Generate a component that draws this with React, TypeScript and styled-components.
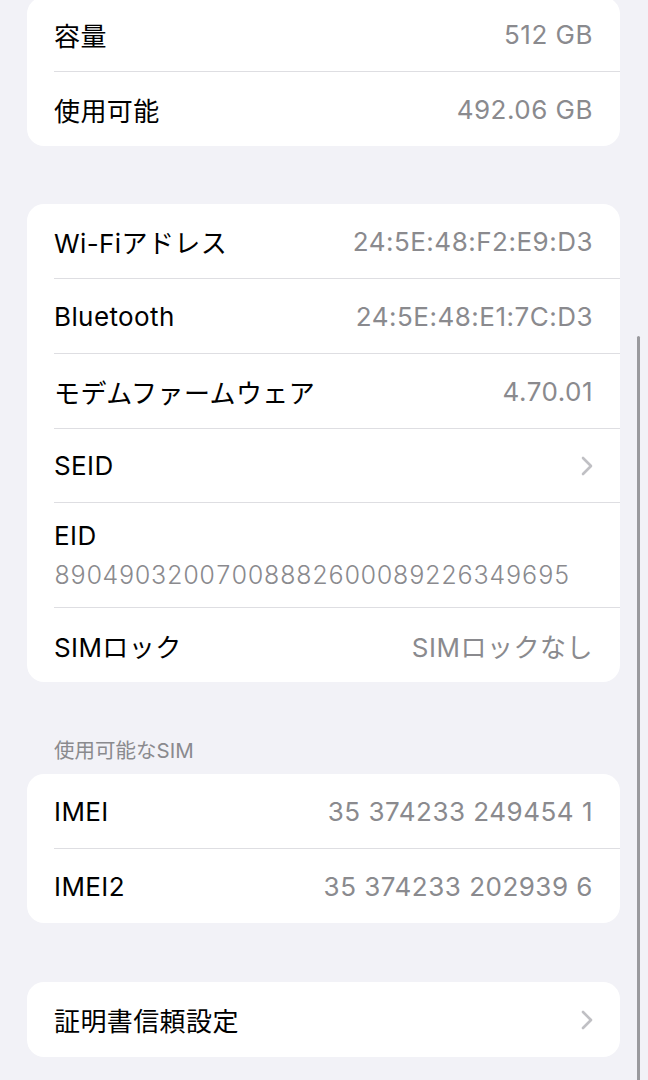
import styled, { createGlobalStyle } from 'styled-components'
import { ReactNode } from 'react'

const GlobalStyle = createGlobalStyle`
  html, body {
    margin: 0;
    padding: 0;
    background: #f2f2f7;
  }
  body {
    font-family: Inter, "Noto Sans CJK JP", sans-serif;
    -webkit-font-smoothing: antialiased;
  }
`

const Page = styled.div`
  position: relative;
  width: 648px;
  height: 1080px;
  overflow: hidden;
  background: #f2f2f7;
  display: flex;
  flex-direction: column;
  padding: 0 28px 0 27px;
  box-sizing: border-box;
`

const Card = styled.div<{ $gap?: number }>`
  background: #ffffff;
  border-radius: 17px;
  margin-top: ${({ $gap }) => $gap ?? 0}px;
  overflow: hidden;
  display: flex;
  flex-direction: column;
`

const Row = styled.div<{ $height?: number }>`
  height: ${({ $height }) => $height ?? 74}px;
  padding: 0 27px;
  display: flex;
  align-items: center;
  justify-content: space-between;
  gap: 16px;
`

const Separator = styled.div`
  height: 1px;
  margin-left: 27px;
  background: #dedee2;
`

const Label = styled.span`
  font-size: 26px;
  color: #000000;
  letter-spacing: 0.4px;
  white-space: nowrap;
`

const Value = styled.span`
  font-size: 26px;
  color: #8a8a8e;
  letter-spacing: 0.5px;
  white-space: nowrap;
`

const StackRow = styled.div`
  height: 104px;
  padding: 0 27px;
  display: flex;
  flex-direction: column;
  justify-content: center;
  gap: 9px;
`

const LongNumber = styled.span`
  font-size: 25px;
  color: #8a8a8e;
  font-variant-numeric: tabular-nums;
  letter-spacing: -0.05px;
  font-weight: 300;
  white-space: nowrap;
`

const SectionHeader = styled.div`
  margin-top: 56px;
  margin-bottom: 10px;
  padding: 0 27px;
  height: 26px;
  line-height: 26px;
  font-size: 20.5px;
  color: #8a8a8e;
`

const Chevron = styled.svg`
  width: 12px;
  height: 20px;
  flex-shrink: 0;
`

const ScrollThumb = styled.div`
  position: absolute;
  left: 637px;
  top: 336px;
  width: 3px;
  height: 760px;
  border-radius: 2px;
  background: #9a9a9e;
`

const ChevronIcon = () => (
  <Chevron viewBox="0 0 12 20">
    <polyline
      points="2,2 10,10 2,18"
      fill="none"
      stroke="#c0c0c4"
      strokeWidth="2.6"
      strokeLinecap="round"
      strokeLinejoin="round"
    />
  </Chevron>
)

const InfoRow = ({ label, value, height }: { label: string; value?: ReactNode; height?: number }) => (
  <Row $height={height}>
    <Label>{label}</Label>
    {typeof value === 'string' ? <Value>{value}</Value> : value}
  </Row>
)

export default function App() {
  return (
    <>
      <GlobalStyle />
      <Page>
        <Card $gap={-3}>
          <InfoRow label="容量" value="512 GB" />
          <Separator />
          <InfoRow label="使用可能" value="492.06 GB" />
        </Card>

        <Card $gap={58}>
          <InfoRow label="Wi-Fiアドレス" value="24:5E:48:F2:E9:D3" />
          <Separator />
          <InfoRow label="Bluetooth" value="24:5E:48:E1:7C:D3" />
          <Separator />
          <InfoRow label="モデムファームウェア" value="4.70.01" />
          <Separator />
          <InfoRow label="SEID" value={<ChevronIcon />} height={73} />
          <Separator />
          <StackRow>
            <Label>EID</Label>
            <LongNumber>89049032007008882600089226349695</LongNumber>
          </StackRow>
          <Separator />
          <InfoRow label="SIMロック" value="SIMロックなし" />
        </Card>

        <SectionHeader>使用可能なSIM</SectionHeader>
        <Card>
          <InfoRow label="IMEI" value="35 374233 249454 1" />
          <Separator />
          <InfoRow label="IMEI2" value="35 374233 202939 6" />
        </Card>

        <Card $gap={59}>
          <InfoRow label="証明書信頼設定" value={<ChevronIcon />} height={75} />
        </Card>

        <ScrollThumb />
      </Page>
    </>
  )
}
